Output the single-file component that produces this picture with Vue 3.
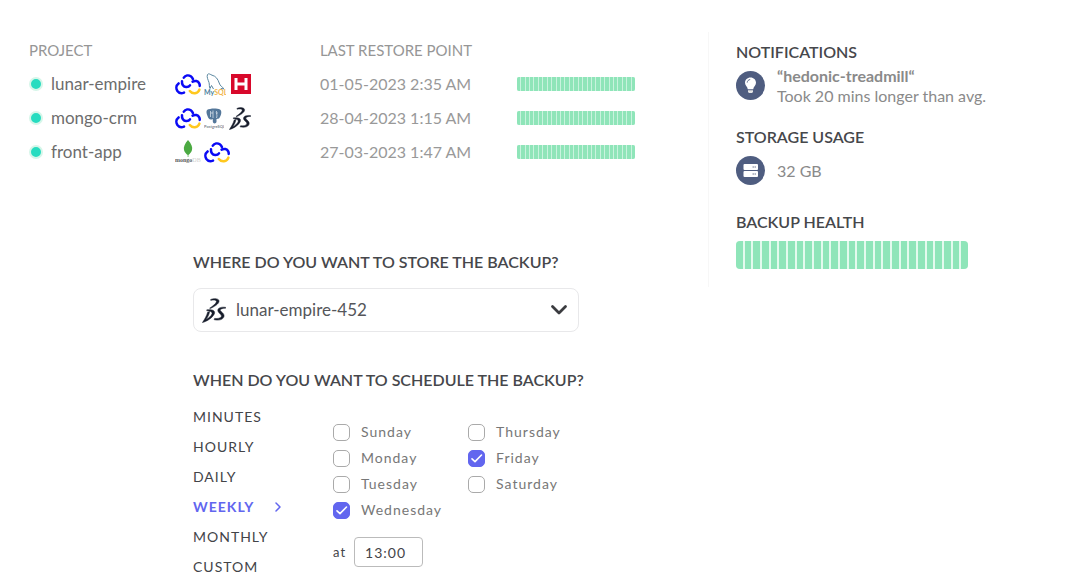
<script setup>
import { ref } from 'vue'

const projects = [
  { name: 'lunar-empire', tools: ['cloud', 'mysql', 'h'], date: '01-05-2023 2:35 AM' },
  { name: 'mongo-crm', tools: ['cloud', 'postgres', 'ds'], date: '28-04-2023 1:15 AM' },
  { name: 'front-app', tools: ['mongo', 'cloud'], date: '27-03-2023 1:47 AM' },
]
const wordmarks = {
  mysql: { y: 23, parts: ['My', 'SQL'] },
  postgres: { y: 20, parts: ['Postgre', 'SQL'] },
  mongo: { y: 22, parts: ['mongo', 'DB'] },
}
const frequencies = ['MINUTES', 'HOURLY', 'DAILY', 'WEEKLY', 'MONTHLY', 'CUSTOM']
const frequency = ref('WEEKLY')
const dayColumns = [
  ['Sunday', 'Monday', 'Tuesday', 'Wednesday'],
  ['Thursday', 'Friday', 'Saturday'],
]
const days = ref(['Wednesday', 'Friday'])
const target = ref('lunar-empire-452')
const time = ref('13:00')
</script>

<template>
  <svg class="defs" aria-hidden="true">
    <symbol id="cloud" viewBox="0 0 26 21">
      <g fill="none" stroke="#0a0af5" stroke-width="2.500" stroke-linecap="round">
        <path d="M3.600 9.400C1 11.400 .8 14.600 2.400 17C4 19.200 6.800 19.600 9 18.600" />
        <path d="M8.800 3.600C10.400 1.200 13.600 .8 15.800 2.200C16.800 2.900 17.500 3.900 17.900 5" />
        <path d="M7 7.200C6.600 10.200 8.400 12.800 11.200 13.100C12.800 13.200 14.200 12.600 15 11.400" />
        <path d="M17.600 7.600C20 6.200 23 7 24.200 9.400C24.600 10.200 24.800 11 24.700 12" />
      </g>
      <path d="M14.800 17C17.400 20.400 23 20 24.400 15.600" fill="none" stroke="#ffc81e" stroke-width="2.500" stroke-linecap="round" />
    </symbol>
    <symbol id="mysql" viewBox="0 0 22 24">
      <path d="M6 16.500C5 14.500 5.600 12.500 5 10.500C4 7.500 2.500 5 3.500 2.500C4.500 1 6.500 2.500 8 3.200C12 4 14 7.500 15.200 11C16 14 18.500 15 20 16.800L17 16.600L18.500 18.500M6 16.500L7.500 13.500L9.500 17" fill="none" stroke="#5a87a0" stroke-width="1" />
    </symbol>
    <symbol id="h" viewBox="0 0 20 20">
      <path d="M0 0H20V20H0Z" fill="#d8082b" />
      <path d="M5 4V16M15 4V16M5 10H15" fill="none" stroke="#fff" stroke-width="3" />
    </symbol>
    <symbol id="postgres" viewBox="0 0 20 21">
      <path d="M3 2C6 0 13 0 16 1.500C18.500 3 17 8 15 10.500L12.500 11V14C12 16 9 16 8.800 13.500V11C6 12.500 4.500 11 3.500 8C2.500 5.500 2 3.500 3 2Z" fill="#54779a" />
      <path d="M6.500 3V9M9 2.500V10M12.500 3C11.500 5 14 7 12.500 10M7 5H9M12 5H14" fill="none" stroke="#d5e0ea" stroke-width=".8" />
    </symbol>
    <symbol id="ds" viewBox="0 0 24 25">
      <g fill="#171c2b" stroke="#171c2b" stroke-width=".5">
        <path d="M8.600 1.600C11.500 0 17.600 .2 17 3.600C16.500 6.200 12.500 8.600 8.200 10.600L7.600 10.200C11 8 14 5.600 14.400 3.800C14.800 2 11.500 1.800 8.800 2.400Z" />
        <path fill-rule="evenodd" d="M4.800 11.800C10 11.200 14 12.400 12.200 16.200C10.400 19.800 5 23.400 .4 24.600C2.800 21 4.600 17.800 5.600 14.200L7.600 13.600C7.200 16.600 5.600 19.400 4 21.600C7 20 9.400 17.800 10 15.800C10.500 13.800 7.800 13 4.800 12.800Z" />
        <path d="M23.600 10.200C21.400 10.200 18.200 10.800 18.200 12C18.400 13.800 22.800 15.400 22 18.600C21 22 16 22.800 12 21.600L12.600 20.400C15.600 20.800 18.800 20.200 19.400 18.400C20 16.200 15.400 14.800 15.800 12C16.200 9.200 20.600 8.800 23.800 9.400Z" />
      </g>
    </symbol>
    <symbol id="mongo" viewBox="0 0 26 24">
      <path d="M13 0C16.500 4 17.800 7 17 10C16.400 12.500 14.500 14 13.400 15V17H12.700V15C11.500 14 9.600 12.500 9 10C8.200 7 10 3.500 13 0Z" fill="#4caa42" />
    </symbol>
  </svg>

  <div class="page">
    <main class="main">
      <table class="projects">
        <thead>
          <tr>
            <th class="name-col" scope="col">PROJECT</th>
            <th class="tools-col"></th>
            <th class="date-col" scope="col">LAST RESTORE POINT</th>
            <th></th>
          </tr>
        </thead>
        <tbody>
          <tr v-for="p in projects" :key="p.name">
            <td><span class="name"><i class="dot"></i>{{ p.name }}</span></td>
            <td>
              <span class="tools">
                <svg v-for="t in p.tools" :key="t" :class="['logo', 'logo-' + t]">
                  <use :href="'#' + t" />
                  <text v-if="wordmarks[t]" x="0" :y="wordmarks[t].y">{{ wordmarks[t].parts[0] }}<tspan>{{ wordmarks[t].parts[1] }}</tspan></text>
                </svg>
              </span>
            </td>
            <td class="date">{{ p.date }}</td>
            <td><div class="health small"><i v-for="n in 27" :key="n"></i></div></td>
          </tr>
        </tbody>
      </table>

      <form class="form" @submit.prevent>
        <label class="title" for="target">WHERE DO YOU WANT TO STORE THE BACKUP?</label>
        <div class="picker">
          <svg class="picked"><use href="#ds" /></svg>
          <select id="target" v-model="target">
            <option>lunar-empire-452</option>
          </select>
          <svg class="chevron" viewBox="0 0 18 12"><path d="M2.500 2.500L9 9L15.500 2.500" fill="none" stroke="#3b3c40" stroke-width="2.800" stroke-linecap="round" stroke-linejoin="round" /></svg>
        </div>

        <h2 class="title">WHEN DO YOU WANT TO SCHEDULE THE BACKUP?</h2>
        <div class="schedule">
          <div class="frequencies">
            <button v-for="f in frequencies" :key="f" type="button" :class="{ active: f === frequency }" @click="frequency = f">
              {{ f }}
              <svg v-if="f === frequency" viewBox="0 0 6 10"><path d="M1 1L5 5L1 9" fill="none" stroke="#6266ef" stroke-width="1.500" stroke-linecap="round" stroke-linejoin="round" /></svg>
            </button>
          </div>
          <div class="when">
            <div class="days">
              <div v-for="(col, i) in dayColumns" :key="i" class="day-column">
                <label v-for="d in col" :key="d">
                  <span class="check">
                    <input v-model="days" type="checkbox" :value="d" />
                    <svg viewBox="0 0 17 17"><path d="M4 8.800L7 11.600L13.500 5" fill="none" stroke="#fff" stroke-width="1.600" stroke-linecap="round" stroke-linejoin="round" /></svg>
                  </span>
                  {{ d }}
                </label>
              </div>
            </div>
            <label class="time">at <input v-model="time" type="text" /></label>
          </div>
        </div>
      </form>
    </main>

    <aside class="side">
      <section>
        <h2 class="title">NOTIFICATIONS</h2>
        <div class="fact">
          <svg class="badge" viewBox="0 0 29 29">
            <circle cx="14.500" cy="14.500" r="14.500" fill="#4f5d80" />
            <path d="M14.500 6.500C11.300 6.500 9 8.900 9 11.800C9 14.600 11.300 15.400 11.800 18.200H17.200C17.700 15.400 20 14.600 20 11.800C20 8.900 17.700 6.500 14.500 6.500Z" fill="#fff" />
            <path d="M12 19.200H17V21L16 22H13L12 21Z" fill="#e5e5e5" />
            <path d="M11.200 11.600C11.300 9.900 12.500 8.700 14.200 8.500" fill="none" stroke="#4f5d80" stroke-width=".9" />
          </svg>
          <p><strong>“hedonic-treadmill“</strong><br />Took 20 mins longer than avg.</p>
        </div>
      </section>
      <section>
        <h2 class="title">STORAGE USAGE</h2>
        <div class="fact">
          <svg class="badge" viewBox="0 0 29 29">
            <circle cx="14.500" cy="14.500" r="14.500" fill="#4f5d80" />
            <rect x="7.500" y="8" width="14.500" height="6" rx="1" fill="#fff" />
            <rect x="7.500" y="15" width="14.500" height="6" rx="1" fill="#fff" />
            <path d="M16.500 11H20M16.500 18H20" stroke="#737b92" stroke-width="1" stroke-dasharray="1.500 .5" />
          </svg>
          <p>32 GB</p>
        </div>
      </section>
      <section>
        <h2 class="title">BACKUP HEALTH</h2>
        <div class="health large"><i v-for="n in 27" :key="n"></i></div>
      </section>
    </aside>
  </div>
</template>

<style>
body { background: #fff; }
</style>

<style scoped>
* { box-sizing: border-box; }
.defs { position: absolute; width: 0; height: 0; }
.page {
  display: grid;
  grid-template-columns: minmax(0, 177fr) minmax(0, 93fr);
  align-items: start;
  padding-top: 32px;
  font: 16px/20px Lato, "Open Sans", sans-serif;
  color: #777;
}
.title {
  display: block;
  margin: 0;
  font-size: 16px;
  line-height: 20px;
  font-weight: 600;
  white-space: nowrap;
  color: #46474b;
}
.main { padding: 1px 73px 0 29px; }
.projects { width: 100%; border-collapse: collapse; table-layout: fixed; }
.projects th, .projects td { padding: 0; text-align: left; vertical-align: middle; }
.projects th { height: 34px; font-size: 15px; font-weight: 400; color: #969696; }
.projects tbody tr { height: 34px; }
.name-col, .tools-col { width: 24%; }
.date-col { width: 32%; }
.name { display: flex; align-items: center; gap: 8px; font-size: 17px; color: #6d6d6d; }
.projects .date { font-size: 16px; color: #999; }
.dot { width: 14px; height: 14px; border: 2px solid #d6f6e9; border-radius: 50%; background: #27dcc0; }
.tools { display: flex; align-items: center; gap: 3px; padding-left: 1px; }
.logo { flex: none; width: 26px; height: 21px; font-family: Lato, sans-serif; font-weight: 700; }
.logo-mysql { width: 22px; height: 24px; font-size: 7px; fill: #4d7f9e; }
.logo-mysql tspan { fill: #f2b64c; }
.logo-h { width: 20px; height: 20px; margin-left: 2px; }
.logo-postgres { width: 20px; font-size: 4px; fill: #7d858c; }
.logo-ds { width: 22px; height: 23px; margin-left: 2px; }
.logo-mongo { height: 24px; font-family: "Liberation Serif", serif; font-size: 6px; fill: #5c5c5c; }
.logo-mongo tspan { fill: #cfcfcf; font-weight: 400; }

.health { display: flex; overflow: hidden; background: #c9f3de; }
.health i { flex: 1; background: #8fe5b9; }
.small { height: 14px; margin-left: 3px; gap: 1px; border-radius: 2px; }
.large { height: 28px; gap: 2px; border-radius: 4px; background: #e4faee; }

.form { padding: 83px 56px 0 164px; }
.picker {
  display: flex;
  align-items: center;
  height: 44px;
  margin: 16px 0 38px;
  padding: 0 10px 0 8px;
  border: 1px solid #e8e8ea;
  border-radius: 8px;
}
.picked { width: 24px; height: 25px; }
select {
  flex: 1;
  min-width: 0;
  height: 40px;
  padding: 0 10px;
  border: 0;
  appearance: none;
  background: none;
  font: inherit;
  font-size: 17px;
  color: #55565a;
}
.chevron { width: 18px; height: 12px; }
.schedule { display: flex; gap: 52px; margin-top: 12px; }
.frequencies { display: flex; flex-direction: column; width: 88px; }
.frequencies button {
  display: flex;
  align-items: center;
  justify-content: space-between;
  height: 30px;
  padding: 0;
  border: 0;
  background: none;
  font: inherit;
  font-size: 14px;
  letter-spacing: 1px;
  color: #434448;
}
.frequencies .active { font-weight: 700; color: #6266ef; }
.frequencies svg { width: 6px; height: 10px; }
.when { flex: 1; padding-top: 20px; }
.days { display: flex; gap: 26px; }
.day-column { display: flex; flex-direction: column; gap: 6px; }
.day-column label {
  display: flex;
  align-items: center;
  gap: 11px;
  font-size: 14px;
  line-height: 20px;
  letter-spacing: 1px;
}
.check { display: grid; }
.check input, .check svg { grid-area: 1 / 1; width: 17px; height: 17px; margin: 0; }
.check input { appearance: none; border: 1px solid #aaa; border-radius: 5px; background: #fff; }
.check input:checked { border-color: #6266ef; background: #6266ef; }
.check svg { pointer-events: none; }
.time { display: flex; align-items: center; gap: 8px; margin-top: 17px; font-size: 13px; letter-spacing: 1px; color: #434448; }
.time input {
  width: 69px;
  height: 30px;
  padding: 0 10px;
  border: 1px solid #bbb;
  border-radius: 4px;
  font: inherit;
  font-size: 14px;
  letter-spacing: 1px;
  color: #434448;
}

.side {
  display: flex;
  flex-direction: column;
  gap: 18px;
  padding: 10px 112px 18px 27px;
  border-left: 1px solid #f7f7f7;
}
.fact { display: flex; align-items: center; gap: 12px; min-height: 47px; font-size: 16px; color: #8a8a8a; }
.fact p { margin: 0; white-space: nowrap; }
.badge { flex: none; width: 29px; height: 29px; }
.side .large { margin-top: 9px; }
</style>
